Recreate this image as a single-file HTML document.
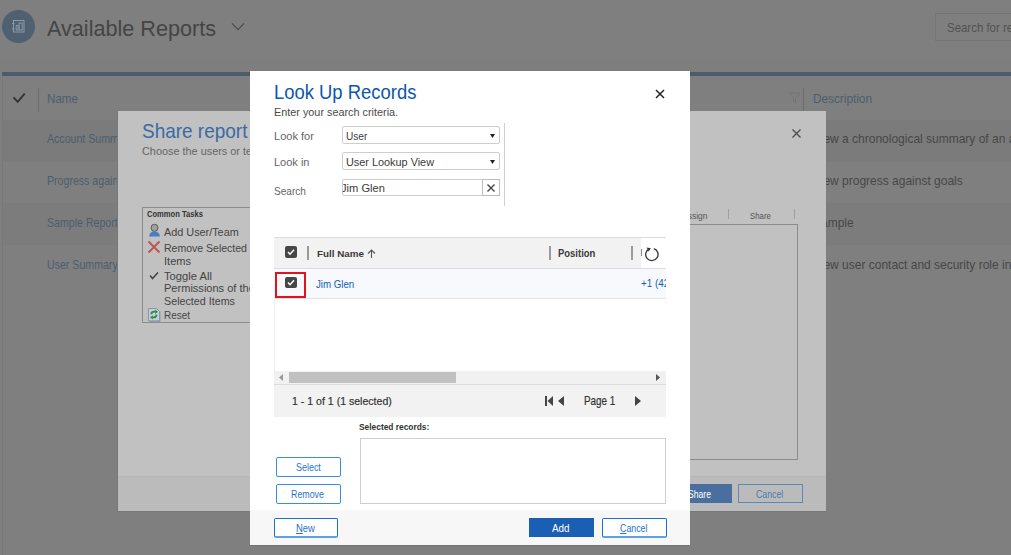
<!DOCTYPE html>
<html><head><meta charset="utf-8">
<style>
*{margin:0;padding:0;box-sizing:border-box}
html,body{width:1011px;height:555px;overflow:hidden;background:#7f7f7f;font-family:"Liberation Sans",sans-serif;position:relative}
.a{position:absolute;white-space:nowrap}
svg.a{overflow:visible}
u{text-decoration:underline}
</style></head><body>
<div class="a" style="left:2px;top:10px;width:33px;height:33px;border-radius:50%;background:#4f6070"></div>
<svg class="a" style="left:11px;top:18px" width="16" height="16"><g fill="none" stroke="#8c99a6" stroke-width="1"><rect x="2.5" y="2.5" width="10.5" height="11.5"/><path d="M1 5.5h2.5M1 11h2.5"/><rect x="5.2" y="7.5" width="2" height="4.5"/><rect x="8.2" y="5" width="3" height="7"/></g></svg>
<div class="a t" style="left:46.60px;top:17.64px;font-size:21.80px;line-height:21.80px;color:#454545;font-weight:400;transform:scaleX(0.9912);transform-origin:0 0;">Available Reports</div>
<svg class="a" style="left:231px;top:21px" width="14" height="10"><path d="M1 2.3l6 6.4 6-6.4" fill="none" stroke="#4a4a4a" stroke-width="1.1"/></svg>
<div class="a" style="left:935px;top:13px;width:90px;height:28px;border:1px solid #757575"></div>
<div class="a t" style="left:947.20px;top:22.39px;font-size:12.06px;line-height:12.06px;color:#525252;font-weight:400;transform:scaleX(0.9500);transform-origin:0 0;">Search for records</div>
<div class="a" style="left:0px;top:58px;width:1011px;height:14px;background:#7e7e7e"></div>
<div class="a" style="left:2px;top:72px;width:1009px;height:4px;background:#4d5b6a"></div>
<div class="a" style="left:2px;top:76px;width:1px;height:479px;background:#787878"></div>
<svg class="a" style="left:12px;top:91px" width="15" height="14"><path d="M1.5 6.3l4.2 4.5 7-8.2" fill="none" stroke="#333" stroke-width="1.9"/></svg>
<div class="a" style="left:38px;top:88px;width:1px;height:24px;background:#6c6c6c"></div>
<div class="a t" style="left:47.20px;top:93.04px;font-size:12.35px;line-height:12.35px;color:#4b5e70;font-weight:400;transform:scaleX(0.9398);transform-origin:0 0;">Name</div>
<svg class="a" style="left:788px;top:92px" width="13" height="12"><path d="M1 1h11l-4.5 5v5l-2-1.5V6z" fill="none" stroke="#727578" stroke-width="1"/></svg>
<div class="a" style="left:803px;top:88px;width:1px;height:24px;background:#6c6c6c"></div>
<div class="a t" style="left:812.60px;top:92.84px;font-size:12.35px;line-height:12.35px;color:#4b5e70;font-weight:400;transform:scaleX(0.9551);transform-origin:0 0;">Description</div>
<div class="a" style="left:3px;top:120px;width:1008px;height:42px;background:#7b7b7b"></div>
<div class="a" style="left:3px;top:203px;width:1008px;height:42px;background:#7c7c7c"></div>
<div class="a t" style="left:46.90px;top:133.49px;font-size:12.06px;line-height:12.06px;color:#4b5e70;font-weight:400;transform:scaleX(0.8800);transform-origin:0 0;">Account Summary</div>
<div class="a t" style="left:813.40px;top:133.49px;font-size:12.06px;line-height:12.06px;color:#474747;font-weight:400;transform:scaleX(0.9950);transform-origin:0 0;">View a chronological summary of an account</div>
<div class="a t" style="left:46.90px;top:175.49px;font-size:12.06px;line-height:12.06px;color:#4b5e70;font-weight:400;transform:scaleX(0.8800);transform-origin:0 0;">Progress against goals</div>
<div class="a t" style="left:813.40px;top:175.49px;font-size:12.06px;line-height:12.06px;color:#474747;font-weight:400;transform:scaleX(0.9950);transform-origin:0 0;">View progress against goals</div>
<div class="a t" style="left:46.90px;top:216.99px;font-size:12.06px;line-height:12.06px;color:#4b5e70;font-weight:400;transform:scaleX(0.8800);transform-origin:0 0;">Sample Report</div>
<div class="a t" style="left:813.40px;top:216.99px;font-size:12.06px;line-height:12.06px;color:#474747;font-weight:400;transform:scaleX(0.9950);transform-origin:0 0;">Sample</div>
<div class="a t" style="left:46.90px;top:258.69px;font-size:12.06px;line-height:12.06px;color:#4b5e70;font-weight:400;transform:scaleX(0.8800);transform-origin:0 0;">User Summary</div>
<div class="a t" style="left:813.40px;top:258.69px;font-size:12.06px;line-height:12.06px;color:#474747;font-weight:400;transform:scaleX(0.9950);transform-origin:0 0;">View user contact and security role information</div>
<div class="a" style="left:118px;top:111px;width:708px;height:400px;background:#c1c1c1"></div>
<div class="a" style="left:118px;top:476px;width:708px;height:35px;background:#bbbbbb;border-top:1px solid #b6b6b6"></div>
<div class="a" style="left:118px;top:511px;width:708px;height:1px;background:#777"></div>
<div class="a" style="left:117px;top:111px;width:1px;height:401px;background:#787878"></div>
<div class="a t" style="left:141.60px;top:122.19px;font-size:19.62px;line-height:19.62px;color:#3a6aa3;font-weight:400;transform:scaleX(0.9670);transform-origin:0 0;">Share report</div>
<div class="a t" style="left:141.60px;top:146.20px;font-size:11.34px;line-height:11.34px;color:#666;font-weight:400;transform:scaleX(0.9600);transform-origin:0 0;">Choose the users or teams with whom you want to share</div>
<svg class="a" style="left:791px;top:128px" width="11" height="11"><path d="M1.5 1.5l8 8M9.5 1.5l-8 8" stroke="#505050" stroke-width="1.4"/></svg>
<div class="a" style="left:142px;top:207px;width:200px;height:116px;border:1px solid #8c8c8c"></div>
<div class="a t" style="left:147.40px;top:210.51px;font-size:8.14px;line-height:8.14px;color:#333;font-weight:700;transform:scaleX(0.9335);transform-origin:0 0;">Common Tasks</div>
<svg class="a" style="left:148px;top:223px" width="13" height="14"><ellipse cx="6.5" cy="4.8" rx="3.4" ry="3.6" fill="#a0a0a0" stroke="#5a5a5a" stroke-width="1"/><path d="M1.2 13.6c0-3.6 2.4-5.2 5.3-5.2s5.3 1.6 5.3 5.2z" fill="#4a7cbf"/></svg>
<div class="a t" style="left:163.90px;top:225.66px;font-size:11.63px;line-height:11.63px;color:#444;font-weight:400;transform:scaleX(0.9324);transform-origin:0 0;">Add User/Team</div>
<svg class="a" style="left:147px;top:240px" width="14" height="14"><path d="M1.5 1.5l11 11M12.5 1.5l-11 11" stroke="#c0504d" stroke-width="1.8"/></svg>
<div class="a t" style="left:163.90px;top:242.46px;font-size:11.63px;line-height:11.63px;color:#444;font-weight:400;transform:scaleX(0.9041);transform-origin:0 0;">Remove Selected</div>
<div class="a t" style="left:163.90px;top:255.46px;font-size:11.63px;line-height:11.63px;color:#444;font-weight:400;transform:scaleX(0.95);transform-origin:0 0">Items</div>
<svg class="a" style="left:149px;top:271px" width="10" height="9"><path d="M1 4.5l2.5 3 5.5-6" fill="none" stroke="#444" stroke-width="1.5"/></svg>
<div class="a t" style="left:163.90px;top:269.56px;font-size:11.63px;line-height:11.63px;color:#444;font-weight:400;transform:scaleX(0.9645);transform-origin:0 0;">Toggle All</div>
<div class="a t" style="left:163.90px;top:282.46px;font-size:11.63px;line-height:11.63px;color:#444;font-weight:400;transform:scaleX(0.95);transform-origin:0 0">Permissions of the</div>
<div class="a t" style="left:163.90px;top:295.36px;font-size:11.63px;line-height:11.63px;color:#444;font-weight:400;transform:scaleX(0.9231);transform-origin:0 0;">Selected Items</div>
<svg class="a" style="left:148px;top:308px" width="13" height="14"><path d="M1.5 13.5h10.5v-10" fill="none" stroke="#9a9aa6" stroke-width="1"/><path d="M0.5 0.5h8l3 3v9.3h-11z" fill="#c4cedd" stroke="#8a96ad"/><path d="M3.2 6.3Q3.4 3.7 6.3 3.7H7.6" fill="none" stroke="#2d8f3a" stroke-width="1.8"/><path d="M7.2 1.6L10 3.8L7.2 6z" fill="#2d8f3a"/><path d="M8.6 6.6Q8.4 9.4 5.5 9.4H4.3" fill="none" stroke="#2d8f3a" stroke-width="1.8"/><path d="M4.8 7.3L2 9.4L4.8 11.5z" fill="#2d8f3a"/></svg>
<div class="a t" style="left:163.90px;top:309.36px;font-size:11.63px;line-height:11.63px;color:#444;font-weight:400;transform:scaleX(0.8567);transform-origin:0 0;">Reset</div>
<div class="a t" style="left:682.10px;top:212.36px;font-size:8.43px;line-height:8.43px;color:#555;font-weight:400;transform:scaleX(1.0083);transform-origin:0 0;">Assign</div>
<div class="a" style="left:728px;top:209px;width:1px;height:10px;background:#a0a0a0"></div>
<div class="a t" style="left:750.40px;top:212.36px;font-size:8.43px;line-height:8.43px;color:#555;font-weight:400;transform:scaleX(0.9330);transform-origin:0 0;">Share</div>
<div class="a" style="left:794px;top:209px;width:1px;height:10px;background:#a0a0a0"></div>
<div class="a" style="left:600px;top:224px;width:198px;height:236px;border:1px solid #8c8c8c"></div>
<div class="a" style="left:640px;top:484px;width:92px;height:19px;background:#4a6f9f"></div>
<div class="a t" style="left:687.90px;top:489.54px;font-size:10.47px;line-height:10.47px;color:#fff;font-weight:400;transform:scaleX(0.8231);transform-origin:0 0;">Share</div>
<div class="a" style="left:738px;top:484px;width:65px;height:19px;border:1px solid #5b89bd"></div>
<div class="a t" style="left:756.30px;top:489.54px;font-size:10.47px;line-height:10.47px;color:#4b7bb0;font-weight:400;transform:scaleX(0.8375);transform-origin:0 0;">Cancel</div>
<div class="a" style="left:250px;top:71px;width:440px;height:474px;background:#fff"></div>
<div class="a" style="left:250px;top:510px;width:440px;height:35px;background:#f7f7f7"></div>
<div class="a" style="left:250px;top:545px;width:440px;height:1px;background:#747474"></div>
<div class="a t" style="left:274.00px;top:82.12px;font-size:20.06px;line-height:20.06px;color:#0c56b0;font-weight:400;transform:scaleX(0.9190);transform-origin:0 0;">Look Up Records</div>
<div class="a t" style="left:274.00px;top:106.80px;font-size:11.34px;line-height:11.34px;color:#4a4a4a;font-weight:400;transform:scaleX(0.9568);transform-origin:0 0;">Enter your search criteria.</div>
<svg class="a" style="left:655px;top:89px" width="10" height="10"><path d="M1 1l8 8M9 1l-8 8" stroke="#222" stroke-width="1.5"/></svg>
<div class="a t" style="left:273.90px;top:130.70px;font-size:11.34px;line-height:11.34px;color:#666;font-weight:400;transform:scaleX(0.9760);transform-origin:0 0;">Look for</div>
<div class="a t" style="left:273.90px;top:157.10px;font-size:11.34px;line-height:11.34px;color:#666;font-weight:400;transform:scaleX(0.9709);transform-origin:0 0;">Look in</div>
<div class="a t" style="left:273.90px;top:185.50px;font-size:11.34px;line-height:11.34px;color:#666;font-weight:400;transform:scaleX(0.8904);transform-origin:0 0;">Search</div>
<div class="a" style="left:342px;top:126px;width:158px;height:18px;border:1px solid #cdcdcd;border-radius:2px"></div>
<div class="a t" style="left:346.00px;top:130.70px;font-size:11.34px;line-height:11.34px;color:#3a3a3a;font-weight:400;transform:scaleX(0.8904);transform-origin:0 0;">User</div>
<svg class="a" style="left:489.5px;top:133.5px" width="5" height="4"><path d="M0 0h5l-2.5 4z" fill="#222"/></svg>
<div class="a" style="left:342px;top:152px;width:158px;height:18px;border:1px solid #cdcdcd;border-radius:2px"></div>
<div class="a t" style="left:346.00px;top:157.10px;font-size:11.34px;line-height:11.34px;color:#3a3a3a;font-weight:400;transform:scaleX(0.9594);transform-origin:0 0;">User Lookup View</div>
<svg class="a" style="left:489.5px;top:159.5px" width="5" height="4"><path d="M0 0h5l-2.5 4z" fill="#222"/></svg>
<div class="a" style="left:342px;top:179px;width:158px;height:17px;border:1px solid #cdcdcd;border-radius:2px;overflow:hidden"></div>
<div class="a t" style="left:341.00px;top:182.90px;font-size:11.34px;line-height:11.34px;color:#3a3a3a;font-weight:400;transform:scaleX(0.9838);transform-origin:0 0;clip-path:inset(0 0 0 1.8px)">Jim Glen</div>
<div class="a" style="left:482px;top:179px;width:18px;height:17px;border:1px solid #bdbdbd"></div>
<svg class="a" style="left:487px;top:184px" width="8" height="8"><path d="M0.5 0.5l7 7M7.5 0.5l-7 7" stroke="#444" stroke-width="1.4"/></svg>
<div class="a" style="left:504px;top:123px;width:1px;height:83px;background:#d0d0d0"></div>
<div class="a" style="left:274px;top:237px;width:392px;height:1px;background:#dcdcdc"></div>
<div class="a" style="left:274px;top:238px;width:392px;height:30px;background:#f2f2f2"></div>
<div class="a" style="left:641px;top:238px;width:25px;height:30px;background:#fff"></div>
<div class="a" style="left:274px;top:268px;width:392px;height:1px;background:#dcdcdc"></div>
<div class="a" style="left:285px;top:246px;width:12px;height:12px;background:#464646;border-radius:2px"></div>
<svg class="a" style="left:285px;top:246px" width="12" height="12"><path d="M3 6l2 2.2 4-4.5" fill="none" stroke="#fff" stroke-width="1.5"/></svg>
<div class="a" style="left:307px;top:246px;width:1.5px;height:14px;background:#9a9a9a"></div>
<div class="a t" style="left:316.90px;top:248.93px;font-size:9.88px;line-height:9.88px;color:#3a3a3a;font-weight:700;transform:scaleX(0.9969);transform-origin:0 0;">Full Name</div>
<svg class="a" style="left:367px;top:249px" width="10" height="9"><path d="M4.5 9V1M1 4.5l3.5-3.5 3.5 3.5" fill="none" stroke="#555" stroke-width="1.1"/></svg>
<div class="a" style="left:549px;top:246px;width:1.5px;height:14px;background:#9a9a9a"></div>
<div class="a t" style="left:558.40px;top:248.91px;font-size:10.03px;line-height:10.03px;color:#3a3a3a;font-weight:700;transform:scaleX(0.9453);transform-origin:0 0;">Position</div>
<div class="a" style="left:631px;top:246px;width:1.5px;height:14px;background:#9a9a9a"></div>
<div class="a" style="left:641px;top:249px;width:1px;height:7px;background:#888"></div>
<svg class="a" style="left:644px;top:246px" width="16" height="16"><path d="M9.8 2.6A6.2 6.2 0 1 1 5.4 2.8" fill="none" stroke="#333" stroke-width="1.3"/><path d="M2.6 1.6L6.8 2.2L4.6 5.6z" fill="#333"/></svg>
<div class="a" style="left:274px;top:269px;width:392px;height:29px;background:#f7f9fc"></div>
<div class="a" style="left:274px;top:298px;width:392px;height:1px;background:#e2e2e2"></div>
<div class="a" style="left:285px;top:277px;width:12px;height:11px;background:#464646;border-radius:2px"></div>
<svg class="a" style="left:285px;top:277px" width="12" height="11"><path d="M3 5.5l2 2.2 4-4.5" fill="none" stroke="#fff" stroke-width="1.5"/></svg>
<div class="a" style="left:275px;top:272px;width:31px;height:26px;border:2px solid #e0141e"></div>
<div class="a t" style="left:316.40px;top:278.92px;font-size:10.61px;line-height:10.61px;color:#1160b7;font-weight:400;transform:scaleX(0.9126);transform-origin:0 0;">Jim Glen</div>
<div class="a" style="left:600px;top:270px;width:66px;height:25px;overflow:hidden"><div class="a t" style="left:41px;top:8.0px;font-size:10.6px;line-height:10.6px;color:#1160b7;transform:scaleX(0.93);transform-origin:0 0">+1 (425) 555-0100</div></div>
<div class="a" style="left:274px;top:299px;width:1px;height:118px;background:#efefef"></div>
<div class="a" style="left:274px;top:371px;width:392px;height:13px;background:#f1f1f1"></div>
<div class="a" style="left:289px;top:372px;width:167px;height:11px;background:#c1c1c1"></div>
<svg class="a" style="left:279px;top:374px" width="5" height="7"><path d="M4 0v7L0 3.5z" fill="#9a9a9a"/></svg>
<svg class="a" style="left:656px;top:374px" width="5" height="7"><path d="M0 0v7l4-3.5z" fill="#555"/></svg>
<div class="a" style="left:274px;top:384px;width:392px;height:1px;background:#dcdcdc"></div>
<div class="a" style="left:274px;top:385px;width:392px;height:32px;background:#f2f2f2"></div>
<div class="a t" style="left:292.10px;top:395.60px;font-size:11.34px;line-height:11.34px;color:#333;font-weight:400;transform:scaleX(0.9325);transform-origin:0 0;-webkit-text-stroke:0.2px #333">1 - 1 of 1 (1 selected)</div>
<svg class="a" style="left:544px;top:395px" width="22" height="12"><path d="M1 1h2v10H1z" fill="#444"/><path d="M9 1v10L3.5 6z" fill="#444"/><path d="M20 1v10L14 6z" fill="#444"/></svg>
<div class="a t" style="left:584.00px;top:394.59px;font-size:12.06px;line-height:12.06px;color:#333;font-weight:400;transform:scaleX(0.8158);transform-origin:0 0;-webkit-text-stroke:0.2px #333">Page 1</div>
<svg class="a" style="left:634px;top:395px" width="8" height="12"><path d="M1 1v10l6-5z" fill="#444"/></svg>
<div class="a t" style="left:359.30px;top:423.24px;font-size:8.58px;line-height:8.58px;color:#333;font-weight:700;transform:scaleX(0.9765);transform-origin:0 0;">Selected records:</div>
<div class="a" style="left:360px;top:438px;width:306px;height:66px;border:1px solid #cfcfcf"></div>
<div class="a" style="left:276px;top:457px;width:65px;height:20px;border:1px solid #3a8ee0;border-radius:2px"></div>
<div class="a t" style="left:295.60px;top:462.89px;font-size:10.17px;line-height:10.17px;color:#1e73cf;font-weight:400;transform:scaleX(0.8803);transform-origin:0 0;">Select</div>
<div class="a" style="left:276px;top:484px;width:65px;height:20px;border:1px solid #3a8ee0;border-radius:2px"></div>
<div class="a t" style="left:291.40px;top:489.89px;font-size:10.17px;line-height:10.17px;color:#1e73cf;font-weight:400;transform:scaleX(0.8707);transform-origin:0 0;">Remove</div>
<div class="a" style="left:274px;top:518px;width:64px;height:20px;background:#fff;border:1px solid #1a73c9;border-bottom:2px solid #5ea0e6;border-radius:2px"></div>
<div class="a t" style="left:296.10px;top:523.74px;font-size:10.47px;line-height:10.47px;color:#1e73cf;font-weight:400;transform:scaleX(0.9055);transform-origin:0 0;"><u>N</u>ew</div>
<div class="a" style="left:529px;top:518px;width:65px;height:19px;background:#1a5fb4"></div>
<div class="a t" style="left:552.20px;top:523.74px;font-size:10.47px;line-height:10.47px;color:#fff;font-weight:400;transform:scaleX(0.9395);transform-origin:0 0;">Add</div>
<div class="a" style="left:602px;top:518px;width:65px;height:20px;background:#fff;border:1px solid #1a73c9;border-bottom:2px solid #5ea0e6;border-radius:2px"></div>
<div class="a t" style="left:620.10px;top:523.74px;font-size:10.47px;line-height:10.47px;color:#1e73cf;font-weight:400;transform:scaleX(0.8436);transform-origin:0 0;"><u>C</u>ancel</div>
</body></html>
